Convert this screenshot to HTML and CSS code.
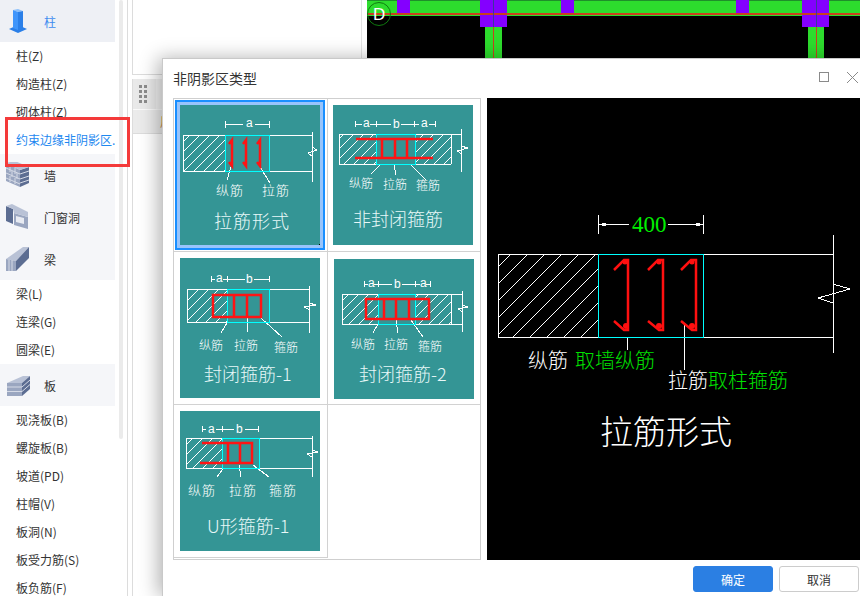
FILE: index.html
```html
<!DOCTYPE html>
<html lang="zh-CN">
<head>
<meta charset="utf-8">
<title>非阴影区类型</title>
<link rel="stylesheet" href="styles.css">
</head>
<body>
<div class="app">
  <nav class="sidebar">
    <div class="head head-active">
      <svg class="head-icon" viewBox="0 0 26 26"><polygon class="c-blue2" points="4,21 13,17 22,21 13,25"/><polygon class="c-blue3" points="8,2 13,1 18,3 13,4"/><polygon class="c-blue1" points="8,2 13,4 13,22 8,20"/><polygon class="c-blue2" points="13,4 18,3 18,20 13,22"/></svg>
      <span>柱</span>
    </div>
    <div class="item">柱(Z)</div>
    <div class="item">构造柱(Z)</div>
    <div class="item">砌体柱(Z)</div>
    <div class="item item-active">约束边缘非阴影区.</div>
    <div class="head">
      <svg class="head-icon" viewBox="0 0 26 26"><polygon class="c-g1" points="1,1 15,8 15,25 1,19"/><polygon class="c-g3" points="15,8 24,5 24,21 15,25"/><polygon class="c-g0" points="1,1 10,-1 24,5 15,8"/><path class="brick" d="M1 6l14 6M1 11l14 6M1 16l14 6M5 4v6M10 6v6M7 9v6M12 11v6M5 14v6M10 16v6M15 12l9-3M15 17l9-3M15 21l9-3"/></svg>
      <span>墙</span>
    </div>
    <div class="head">
      <svg class="head-icon" viewBox="0 0 26 26"><polygon class="c-g3" points="1,2 8,5 8,20 1,17"/><polygon class="c-g1" points="9,9 23,13 23,25 9,21"/><polygon class="c-white" points="11,12 19,14 19,20 11,18"/><polygon class="c-g0" points="1,2 7,0 23,8 23,13 9,9 8,5"/></svg>
      <span>门窗洞</span>
    </div>
    <div class="head">
      <svg class="head-icon" viewBox="0 0 26 26"><polygon class="c-g0" points="1,13 18,1 24,1 11,15"/><polygon class="c-g3" points="11,15 24,1 24,12 11,25"/><polygon class="c-g1" points="1,13 11,15 11,25 1,25"/><path class="brick" d="M4 14v11M7 14v11"/></svg>
      <span>梁</span>
    </div>
    <div class="item">梁(L)</div>
    <div class="item">连梁(G)</div>
    <div class="item">圆梁(E)</div>
    <div class="head">
      <svg class="head-icon" viewBox="0 0 26 26"><polygon class="c-g0" points="2,11 18,4 25,4 17,11"/><polygon class="c-g1" points="2,11 17,11 17,24 2,24"/><polygon class="c-g3" points="17,11 25,4 25,17 17,24"/><path class="brick" d="M2 15h15l8-7M2 19.500h15l8-7"/></svg>
      <span>板</span>
    </div>
    <div class="item">现浇板(B)</div>
    <div class="item">螺旋板(B)</div>
    <div class="item">坡道(PD)</div>
    <div class="item">柱帽(V)</div>
    <div class="item">板洞(N)</div>
    <div class="item">板受力筋(S)</div>
    <div class="item">板负筋(F)</div>
  </nav>

  <div class="scroll-track"><div class="scroll-thumb"></div></div>

  <section class="panel">
    <div class="panel-top"></div>
    <div class="toolbar">
      <div class="toolbar-row">
        <div class="grip"><i></i><i></i><i></i><i></i><i></i><i></i><i></i><i></i></div>
      </div>
      <div class="toolbar-tab"><span>属性</span></div>
    </div>
  </section>

  <div class="canvas-col">
    <svg class="canvas" viewBox="367 0 493 58" width="493" height="58">
      <rect class="f-green" x="367" y="0" width="493" height="16"/>
      <rect class="f-dgreen" x="367" y="0" width="493" height="1"/>
      <rect class="f-green" x="485" y="27" width="17" height="31"/>
      <rect class="f-green" x="808" y="27" width="16" height="31"/>
      <rect class="f-purple" x="397" y="0" width="13" height="14"/>
      <rect class="f-purple" x="480" y="0" width="27" height="27"/>
      <rect class="f-purple" x="561" y="0" width="13" height="14"/>
      <rect class="f-purple" x="736" y="0" width="13" height="14"/>
      <rect class="f-purple" x="802" y="0" width="27" height="27"/>
      <rect class="f-brick" x="367" y="13" width="493" height="2"/>
      <rect class="f-brick" x="493" y="27" width="1" height="31"/>
      <rect class="f-brick" x="816" y="27" width="1" height="31"/>
      <rect class="f-navy" x="493" y="0" width="1" height="27"/>
      <rect class="f-navy" x="816" y="0" width="1" height="27"/>
      <circle class="axis-ring" cx="379" cy="14" r="11.500"/>
      <text class="axis-text" x="373" y="20">D</text>
    </svg>
  </div>
</div>

<div class="red-mark"></div>

<section class="dialog">
  <header class="dialog-head">
    <h1 class="dialog-title">非阴影区类型</h1>
    <div class="win-btns">
      <svg class="win-icon" viewBox="0 0 11 11"><rect x="0.500" y="0.500" width="9" height="9"/></svg>
      <svg class="win-icon" viewBox="0 0 11 11"><path d="M0 0L11 11M11 0L0 11"/></svg>
    </div>
  </header>

  <div class="dialog-body">
    <div class="type-grid">
      <div class="cell">
        <svg class="card card-selected" viewBox="0 0 140 140" width="140" height="140">
          <defs>
            <pattern id="hatch" patternUnits="userSpaceOnUse" width="10" height="10"><path class="hatch-line" d="M-1 1L1 -1M0 10L10 0M9 11L11 9"/></pattern>
          </defs>
          <rect fill="url(#hatch)" x="3" y="30" width="42" height="36"/>
          <path class="ln" d="M3 30H132M3 66H132M3 30V66M132 27V77M89 16V23M45 16V23M45 19H63M75 19H89M51 62L47 75M80 62L90 78M132 42L137 45L128 48L133 52"/>
          <rect class="ln-c" x="45" y="30" width="44" height="36"/>
          <path class="ln-r" d="M49 39L52 35V61L49 57M63 39L66 35V61L63 57M77 39L80 35V61L77 57"/>
          <text class="t-dim" x="66" y="22">a</text>
          <text class="t-lbl" x="36" y="90">纵筋</text>
          <text class="t-lbl" x="82" y="90">拉筋</text>
          <text class="t-title" x="34" y="123">拉筋形式</text>
          <rect x="139" y="139" width="1" height="1"/>
        </svg>
      </div>
      <div class="cell">
        <svg class="card" viewBox="0 0 140 140" width="140" height="140">
          <rect fill="url(#hatch)" x="6" y="29" width="37" height="30"/>
          <rect fill="url(#hatch)" x="82" y="29" width="36" height="30"/>
          <path class="ln" d="M6 29H128M6 59H118M6 29V59M118 29V59M128 24V67M22 16V22M43 16V22M81 16V22M102 16V22M22 19H29M37 19H43M43 19H58M68 19H81M81 19H86M96 19H102M48 59L38 69M61 59L63 70M77 59L93 75M128 41L135 43L124 46L129 49"/>
          <rect class="ln-c" x="43" y="29" width="39" height="30"/>
          <path class="ln-r" d="M23 34H100M22 53H100M49 34V53M62 34V53M74 34V53"/>
          <text class="t-dim" x="30" y="22">a</text>
          <text class="t-dim" x="60" y="23">b</text>
          <text class="t-dim" x="88" y="22">a</text>
          <text class="t-sm" x="16" y="83">纵筋</text>
          <text class="t-sm" x="50" y="84">拉筋</text>
          <text class="t-sm" x="83" y="85">箍筋</text>
          <text class="t-title t-tight" x="20" y="121">非封闭箍筋</text>
        </svg>
      </div>
      <div class="cell">
        <svg class="card" viewBox="0 0 140 140" width="140" height="140">
          <rect fill="url(#hatch)" x="7" y="31" width="40" height="33"/>
          <path class="ln" d="M7 31H129M7 64H129M7 31V64M129 28V75M31 18V24M47 18V24M89 18V24M31 21H35M43 21H47M47 21H65M74 21H89M47 65L41 75M67 60L68 74M81 60L102 79M129 45L136 47L124 49L130 52"/>
          <rect class="ln-c" x="47" y="31" width="42" height="33"/>
          <path class="ln-r2" d="M33 37H81V59H33ZM54 37V59M67 37V59"/>
          <text class="t-dim" x="36" y="24">a</text>
          <text class="t-dim" x="66" y="25">b</text>
          <text class="t-sm" x="19" y="92">纵筋</text>
          <text class="t-sm" x="54" y="92">拉筋</text>
          <text class="t-sm" x="94" y="94">箍筋</text>
          <text class="t-title t-tight" x="24" y="123">封闭箍筋-1</text>
        </svg>
      </div>
      <div class="cell cell-shift">
        <svg class="card" viewBox="0 0 140 140" width="140" height="140">
          <rect fill="url(#hatch)" x="8" y="35" width="36" height="30"/>
          <rect fill="url(#hatch)" x="81" y="35" width="36" height="30"/>
          <path class="ln" d="M8 35H128M8 65H128M8 35V65M117 35V65M128 32V73M30 22V28M44 22V28M81 22V28M96 22V28M30 25H34M40 25H44M44 25H58M68 25H81M81 25H86M92 25H96M44 65L39 74M62 61L64 74M77 61L89 78M128 46L134 48L124 50L129 53"/>
          <rect class="ln-c" x="44" y="35" width="37" height="30"/>
          <path class="ln-r2" d="M32 40H95V60H32ZM50 40V60M62 40V60M75 40V60"/>
          <text class="t-dim" x="34" y="28">a</text>
          <text class="t-dim" x="60" y="29">b</text>
          <text class="t-dim" x="86" y="28">a</text>
          <text class="t-sm" x="17" y="90">纵筋</text>
          <text class="t-sm" x="50" y="90">拉筋</text>
          <text class="t-sm" x="84" y="92">箍筋</text>
          <text class="t-title t-tight" x="25" y="122">封闭箍筋-2</text>
        </svg>
      </div>
      <div class="cell cell-last">
        <svg class="card" viewBox="0 0 140 140" width="140" height="140">
          <rect fill="url(#hatch)" x="6" y="27" width="36" height="30"/>
          <path class="ln" d="M6 27H132M6 57H132M6 27V57M132 25V66M22 15V21M42 15V21M78 15V21M22 18H26M36 18H42M42 18H54M65 18H78M43 58L37 66M59 54L61 66M73 54L89 66M132 39L138 41L127 43L132 46"/>
          <rect class="ln-c" x="42" y="27" width="37" height="30"/>
          <path class="ln-r" d="M22 32H72V52H20M48 32V52M60 32V52"/>
          <text class="t-dim" x="28" y="22">a</text>
          <text class="t-dim" x="56" y="22">b</text>
          <text class="t-md" x="8" y="84">纵筋</text>
          <text class="t-md" x="49" y="84">拉筋</text>
          <text class="t-md" x="89" y="84">箍筋</text>
          <text class="t-title t-tight" x="27" y="122">U形箍筋-1</text>
        </svg>
      </div>
    </div>

    <svg class="preview" viewBox="487 98 373 462" width="373" height="462">
      <defs>
        <pattern id="hatch-big" patternUnits="userSpaceOnUse" width="17" height="17"><path class="hatch-line" d="M-1 1L1 -1M0 17L17 0M16 18L18 16"/></pattern>
      </defs>
      <rect fill="url(#hatch-big)" x="498" y="254" width="100" height="83"/>
      <path class="ln" d="M498 254H833M498 337H833M498 254V337M833 235V353M598 215V234M703 215V234M598 224H629M668 224H703M627 337V350M684 323V370M833 284L850 289L818 298L833 303"/>
      <rect class="ln" x="602" y="223" width="3" height="2"/>
      <rect class="ln" x="696" y="223" width="3" height="2"/>
      <rect class="ln-c" x="598" y="254" width="105" height="83"/>
      <path class="ln-r3" d="M614 270L624 260H628V330H624L614 321M648 270L658 260H663V330H659L648 321M681 270L691 260H696V330H692L681 321"/>
      <circle class="f-red" cx="625" cy="262" r="2.500"/><circle class="f-red" cx="626" cy="326" r="3"/>
      <circle class="f-red" cx="659" cy="262" r="2.500"/><circle class="f-red" cx="659" cy="326" r="3"/>
      <circle class="f-red" cx="692" cy="262" r="2.500"/><circle class="f-red" cx="692" cy="326" r="3"/>
      <text class="p-num" x="632" y="232">400</text>
      <text class="p-txt" x="528" y="368">纵筋</text>
      <text class="p-txt p-green" x="575" y="368">取墙纵筋</text>
      <text class="p-txt" x="668" y="388">拉筋</text>
      <text class="p-txt p-green" x="708" y="388">取柱箍筋</text>
      <text class="p-title" x="600" y="444">拉筋形式</text>
    </svg>
  </div>

  <footer class="dialog-foot">
    <button class="btn btn-primary" type="button">确定</button>
    <button class="btn" type="button">取消</button>
  </footer>
</section>
</body>
</html>
```

FILE: styles.css
```css
html, body { margin: 0; padding: 0; height: 596px; overflow: hidden; background: #fff; }
body { font-family: "Noto Sans CJK SC", "Liberation Sans", sans-serif; font-size: 12px; color: #333; position: relative; }

.app { display: flex; height: 596px; overflow: hidden; }

/* sidebar */
.sidebar { width: 115px; flex: none; height: 596px; overflow: hidden; }
.head { height: 42px; display: flex; align-items: center; background: #f5f6f9; padding-left: 5px; box-sizing: border-box; }
.head-active { background: #eef0f5; color: #3f8cf0; }
.head-icon { width: 26px; height: 26px; margin-right: 13px; flex: none; }
.item { height: 28px; line-height: 28px; padding-left: 16px; white-space: nowrap; overflow: hidden; }
.item-active { color: #1e88f0; }

.c-blue1 { fill: #3f95fb; }
.c-blue2 { fill: #2a7fe8; }
.c-blue3 { fill: #8cc0fb; }
.c-g0 { fill: #b9c2d6; }
.c-g1 { fill: #9aa6c0; }
.c-g3 { fill: #5c6d92; }
.c-white { fill: #e8ebf2; }
.brick { fill: none; stroke: #d5dae6; stroke-width: 1; }

.scroll-track { width: 12px; flex: none; padding-left: 4px; box-sizing: border-box; }
.scroll-thumb { width: 4px; height: 439px; background: #ebebeb; border-radius: 2px; }

/* middle panel */
.panel { width: 235px; flex: none; box-sizing: border-box; border-left: 1px solid #dcdcdc; padding-left: 4px; height: 596px; border-right: 1px solid #e2e2e2; display: flex; flex-direction: column; position: relative; }
.panel-top { height: 74px; flex: none; border-left: 1px solid #dcdcdc; border-bottom: 1px solid #dcdcdc; }
.toolbar { margin-top: 4px; border-left: 1px solid #dcdcdc; flex: 1; }
.toolbar-row { height: 30px; background: #f1f1f1; border-bottom: 1px solid #fafafa; }
.grip { width: 23px; height: 30px; box-sizing: border-box; padding-left: 6px; background: #e9e9e9; display: grid; grid-template-columns: 3px 3px; gap: 2px; justify-content: start; align-content: center; }
.grip i { width: 3px; height: 3px; background: #8c8c8c; }
.toolbar-tab { height: 23px; line-height: 23px; background: #ebebeb; padding-left: 27px; color: #c8893e; border-bottom: 1px solid #dcdcdc; }

.canvas-col { flex: 1; padding-left: 5px; background: #fff; }
.canvas { display: block; background: #000; }
.f-green { fill: #2ddc2d; }
.f-dgreen { fill: #1f8f2a; }
.f-purple { fill: #8400ff; }
.f-brick { fill: #c8401e; }
.f-navy { fill: #3a3a9a; }
.axis-ring { fill: none; stroke: #0f7a0f; stroke-width: 1; }
.axis-text { fill: #fff; font: 17px "Liberation Sans", sans-serif; }

/* red annotation box */
.red-mark { position: absolute; left: 5px; top: 117px; width: 125px; height: 50px; box-sizing: border-box; border: 3px solid #f43a3a; }

/* dialog */
.dialog { position: absolute; left: 162px; top: 58px; width: 698px; height: 538px; box-sizing: border-box; background: #fff; border-top: 1px solid #c9c9c9; border-left: 1px solid #c9c9c9; box-shadow: -4px 0 18px rgba(0, 0, 0, .3); display: flex; flex-direction: column; }
.dialog-head { height: 39px; flex: none; display: flex; align-items: center; justify-content: space-between; padding: 0 2px 2px 10px; box-sizing: border-box; }
.dialog-title { margin: 0; font-size: 14px; font-weight: 400; color: #333; }
.win-btns { display: flex; gap: 17px; align-items: center; }
.win-icon { width: 11px; height: 11px; fill: none; stroke: #8a8a8a; stroke-width: 1; }

.dialog-body { display: flex; gap: 6px; padding-left: 10px; height: 462px; flex: none; }
.type-grid { width: 308px; height: 462px; box-sizing: border-box; border: 1px solid #cfcfcf; display: grid; grid-template-columns: 154px 152px; grid-template-rows: 153px 153px 153px; flex: none; }
.cell { box-sizing: border-box; padding: 6px 0 0 6px; border-right: 1px solid #d2d2d2; border-bottom: 1px solid #d2d2d2; }
.cell:nth-child(2) { padding-left: 5px; border-right: 0; }
.cell-shift { padding: 7px 0 0 6px; border-right: 0; }
.card { display: block; background: #349595; }
.card-selected { box-shadow: 0 0 0 3px #98c4fb, 0 0 0 5px #1a8fff; }

.hatch-line { fill: none; stroke: #fff; stroke-width: 1; shape-rendering: crispEdges; }
.ln { fill: none; stroke: #fff; stroke-width: 1; shape-rendering: crispEdges; }
.ln-c { fill: none; stroke: #00ffff; stroke-width: 1; shape-rendering: crispEdges; }
.ln-r { fill: none; stroke: #ff1414; stroke-width: 2.500; }
.ln-r2 { fill: none; stroke: #ff1414; stroke-width: 2.500; }
.ln-r3 { fill: none; stroke: #ff1010; stroke-width: 2.500; }
.f-red { fill: #ff1010; }

.t-dim { fill: #fff; font: 12px "Liberation Sans", sans-serif; }
.t-sm, .t-md, .t-lbl, .t-title, .p-txt, .p-title { fill: #fff; font-family: "Noto Sans CJK SC", sans-serif; font-weight: 300; }
.t-sm { font-size: 12px; }
.t-lbl { font-size: 13px; letter-spacing: 1px; }
.t-md { font-size: 13px; letter-spacing: 1px; }
.t-title { font-size: 18px; letter-spacing: 1px; fill: #e8f8f8; }
.t-tight { letter-spacing: 0; }

.preview { display: block; background: #000; flex: none; }
.p-num { fill: #00f000; font: 23px "Liberation Serif", serif; }
.p-txt { font-size: 20px; }
.p-green { fill: #00e000; }
.p-title { font-size: 33px; }

.dialog-foot { display: flex; justify-content: flex-end; gap: 6px; padding: 6px 1px 0 0; }
.btn { width: 80px; height: 26px; padding: 0; box-sizing: border-box; background: #fff; border: 1px solid #ccc; border-radius: 3px; font: 12px "Noto Sans CJK SC", sans-serif; color: #333; }
.btn-primary { background: #2b7fe3; border-color: #2b7fe3; color: #fff; }
```
